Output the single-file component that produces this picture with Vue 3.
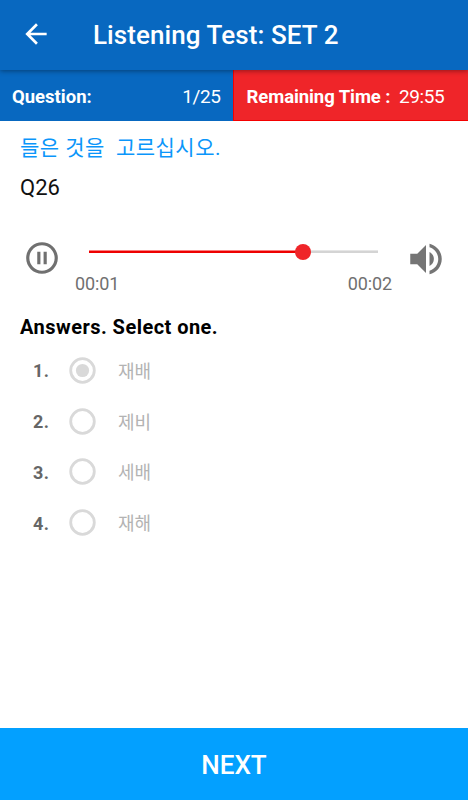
<template>
  <div class="test-page">
    <header class="app-bar">
      <svg class="back-icon" viewBox="0 0 24 24">
        <path d="M20 11H7.83l5.59-5.59L12 4l-8 8 8 8 1.41-1.41L7.83 13H20v-2z" />
      </svg>
      <h1 class="app-title">{{ title }}</h1>
    </header>

    <div class="status-bar">
      <div class="status status-question">
        <b>Question:</b>
        <span>{{ current }}/{{ total }}</span>
      </div>
      <div class="status status-time">
        <b>Remaining Time :</b>
        <span>{{ remaining }}</span>
      </div>
    </div>

    <main class="content">
      <p class="instruction">{{ instruction }}</p>
      <p class="question">Q26</p>

      <div class="player">
        <svg class="pause-icon" viewBox="0 0 24 24">
          <path d="M9 16h2V8H9v8zm3-14C6.48 2 2 6.48 2 12s4.48 10 10 10 10-4.48 10-10S17.52 2 12 2zm0 18c-4.41 0-8-3.59-8-8s3.59-8 8-8 8 3.59 8 8-3.59 8-8 8zm1-4h2V8h-2v8z" />
        </svg>
        <div class="seek">
          <div class="track">
            <div class="track-fill" :style="{ width: progress + '%' }"></div>
            <div class="thumb" :style="{ left: progress + '%' }"></div>
          </div>
          <div class="times">
            <span>00:01</span>
            <span>00:02</span>
          </div>
        </div>
        <svg class="volume-icon" viewBox="0 0 24 24">
          <path d="M3 9v6h4l5 5V4L7 9H3zm13.5 3c0-1.77-1.02-3.29-2.5-4.03v8.05c1.48-.73 2.5-2.25 2.5-4.02zM14 3.23v2.06c2.89.86 5 3.54 5 6.71s-2.11 5.85-5 6.71v2.06c4.01-.91 7-4.49 7-8.77s-2.99-7.86-7-8.77z" />
        </svg>
      </div>

      <h2 class="answers-title">Answers. Select one.</h2>
      <ol class="answers">
        <li v-for="(answer, idx) in answers" :key="idx" class="answer" @click="selected = idx">
          <span class="answer-no">{{ idx + 1 }}.</span>
          <svg class="radio" viewBox="0 0 27 27">
            <circle class="radio-ring" cx="13.5" cy="13.5" r="11.8" />
            <circle v-if="selected === idx" class="radio-dot" cx="13.5" cy="13.5" r="6.6" />
          </svg>
          <span class="answer-text">{{ answer }}</span>
        </li>
      </ol>
    </main>

    <button class="next-btn">NEXT</button>
  </div>
</template>

<script setup>
import { ref } from 'vue'

const title = 'Listening Test: SET 2'
const current = ref(1)
const total = 25
const remaining = ref('29:55')
const instruction = '들은 것을  고르십시오.'
const progress = ref(74)
const answers = ['재배', '제비', '세배', '재해']
const selected = ref(0)
</script>

<style>
body {
  margin: 0;
  background: #fff;
}
</style>

<style scoped>
.test-page {
  display: flex;
  flex-direction: column;
  height: 100vh;
  overflow: hidden;
  font-family: Roboto, "Noto Sans CJK KR", sans-serif;
  background: #fff;
}
.app-bar {
  display: flex;
  align-items: center;
  height: 70px;
  flex-shrink: 0;
  box-sizing: border-box;
  padding-left: 20px;
  background: #0868c0;
  color: #fff;
  position: relative;
  z-index: 1;
  box-shadow: 0 1px 5px rgba(0, 0, 0, 0.4);
}
.back-icon {
  width: 32px;
  height: 32px;
  margin-top: -3px;
  fill: #fff;
}
.app-title {
  margin: 0 0 0 41px;
  font-size: 26px;
  font-weight: 500;
  line-height: 30px;
  letter-spacing: 0.08px;
}
.status-bar {
  display: grid;
  grid-template-columns: 233px 1fr;
  height: 51px;
  flex-shrink: 0;
  color: #fff;
  font-size: 19px;
}
.status {
  display: flex;
  align-items: center;
  padding: 2px 12.5px 0 12px;
}
.status b {
  font-weight: 700;
  font-size: 18.5px;
}
.status span {
  letter-spacing: -0.4px;
}
.status-question {
  justify-content: space-between;
  background: #0868c0;
}
.status-time {
  gap: 8.5px;
  padding: 3px 12px 0 12.5px;
  border: 1px solid #f40000;
  border-width: 0 0 1px 1px;
  background: #ef2529;
}
.status-time b {
  letter-spacing: -0.08px;
}
.content {
  flex: 1;
  padding: 0 20px;
}
.instruction {
  margin: 11px 0 0;
  height: 32px;
  line-height: 32px;
  font-size: 21px;
  letter-spacing: 0.45px;
  white-space: pre;
  color: #0b96fa;
}
.question {
  margin: 10px 0 0;
  font-size: 22px;
  line-height: 28px;
  color: #111;
}
.player {
  display: flex;
  margin-top: 37px;
  height: 60px;
}
.pause-icon {
  width: 38px;
  height: 38px;
  margin-left: 2.5px;
  fill: #707070;
}
.seek {
  width: 317px;
  margin-left: 14.5px;
}
.track {
  position: relative;
  height: 3px;
  margin: 11px 14px 0;
  background: linear-gradient(#e6e6e6 1px, #d4d4d4 1px);
}
.track-fill {
  height: 100%;
  background: linear-gradient(#f98080 1px, #ee0000 1px);
}
.thumb {
  position: absolute;
  top: -6px;
  width: 16px;
  height: 16px;
  margin-left: -8px;
  border-radius: 50%;
  background: #ef2529;
}
.times {
  display: flex;
  justify-content: space-between;
  margin-top: 20px;
  font-size: 18px;
  line-height: 22px;
  letter-spacing: -0.1px;
  color: #707070;
}
.volume-icon {
  width: 42px;
  height: 42px;
  margin: -1.5px 0 0 12.8px;
  flex-shrink: 0;
  fill: #757575;
}
.answers-title {
  margin: 15px 0 0;
  font-size: 20px;
  font-weight: 700;
  line-height: 26px;
  letter-spacing: 0.46px;
  color: #000;
}
.answers {
  margin: 5px 0 0;
  padding: 0;
  list-style: none;
}
.answer {
  display: flex;
  align-items: center;
  height: 50.8px;
  padding-left: 13px;
}
.answer-no {
  width: 36px;
  padding-top: 1px;
  font-size: 18px;
  font-weight: 700;
  letter-spacing: 0.3px;
  color: #666;
}
.radio {
  width: 27px;
  height: 27px;
}
.radio-ring {
  fill: none;
  stroke: #d9d9d9;
  stroke-width: 2.8;
}
.radio-dot {
  fill: #d9d9d9;
}
.answer-text {
  margin-left: 22px;
  padding-top: 3px;
  font-size: 18px;
  line-height: 24px;
  color: #b3b3b3;
}
.next-btn {
  height: 72px;
  flex-shrink: 0;
  padding: 2px 0 0;
  border: 0;
  background: #03a0ff;
  color: #fff;
  font-family: inherit;
  font-size: 26px;
  font-weight: 500;
}
</style>
